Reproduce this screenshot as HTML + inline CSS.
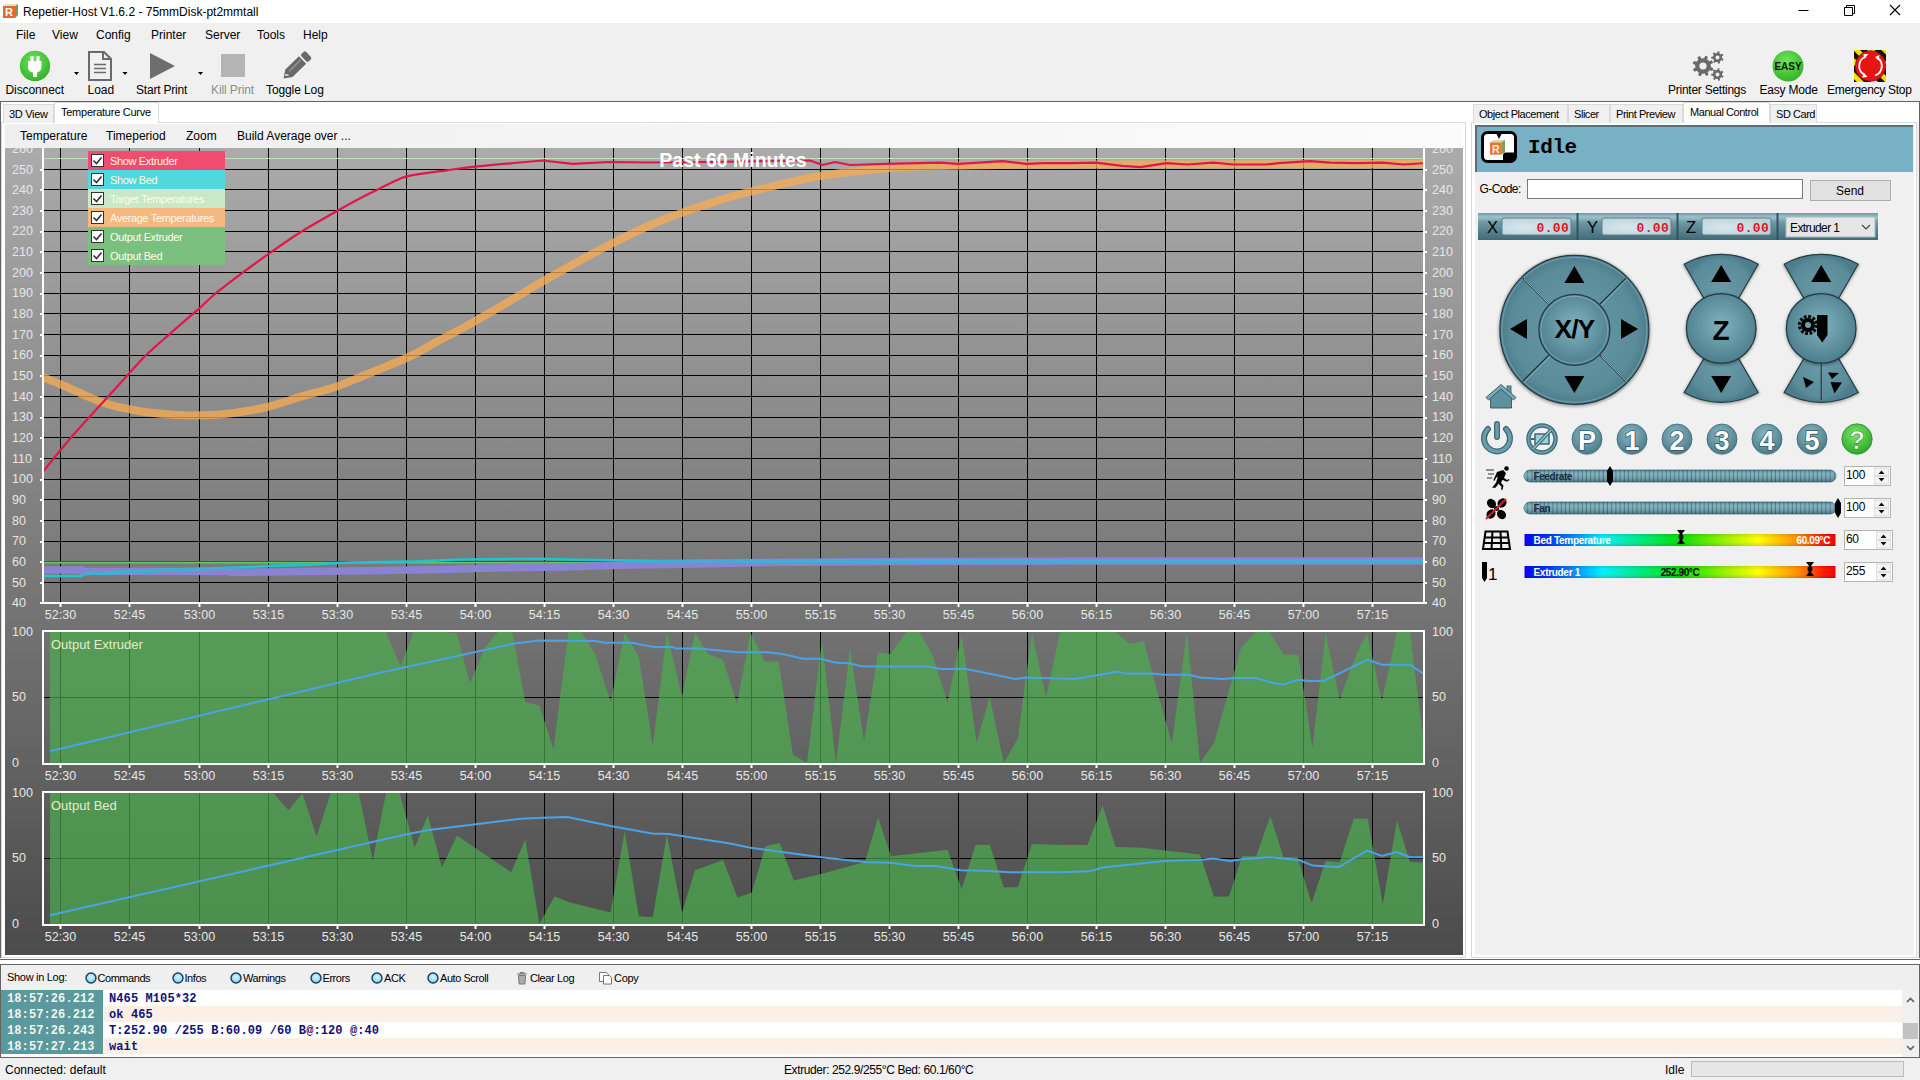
<!DOCTYPE html><html><head><meta charset="utf-8"><style>
*{margin:0;padding:0;box-sizing:border-box}
html,body{width:1920px;height:1080px;overflow:hidden;background:#f0f0f0;font-family:"Liberation Sans", sans-serif;}
.r{position:absolute}
.t{position:absolute;line-height:1;white-space:pre}
</style></head><body><div class="r" style="left:0px;top:0px;width:1920px;height:23px;background:#fff;"></div><svg class="r" style="left:2px;top:3px" width="17" height="16" viewBox="0 0 17 16"><path d="M1 3 L4 1 L16 1 L16 12 L13 15 L1 15Z" fill="#d9d0b0"/><rect x="1" y="3" width="12" height="12" fill="#e06a30"/><path d="M13 3 L16 1 L16 12 L13 15Z" fill="#7a9a50"/><path d="M1 3 L4 1 L16 1 L13 3Z" fill="#e8e0c0"/><text x="7" y="13" font-family="Liberation Sans" font-weight="bold" font-size="11" fill="#fff" text-anchor="middle">R</text></svg><div class="t" style="left:23px;top:5.84px;font-size:12px;color:#000;">Repetier-Host V1.6.2 - 75mmDisk-pt2mmtall</div><svg class="r" style="left:1790px;top:0" width="130" height="23"><path d="M8.5 10.5h10" stroke="#000" stroke-width="1"/><path d="M54.5 7.5h8v8h-8z M56.5 7.5v-2h8v8h-2" stroke="#000" fill="none" stroke-width="1"/><path d="M100 5l10 10M110 5l-10 10" stroke="#000" stroke-width="1.1"/></svg><div class="t" style="left:16px;top:28.84px;font-size:12px;color:#000;">File</div><div class="t" style="left:52px;top:28.84px;font-size:12px;color:#000;">View</div><div class="t" style="left:96px;top:28.84px;font-size:12px;color:#000;">Config</div><div class="t" style="left:151px;top:28.84px;font-size:12px;color:#000;">Printer</div><div class="t" style="left:205px;top:28.84px;font-size:12px;color:#000;">Server</div><div class="t" style="left:257px;top:28.84px;font-size:12px;color:#000;">Tools</div><div class="t" style="left:303px;top:28.84px;font-size:12px;color:#000;">Help</div><svg class="r" style="left:0;top:46px" width="340" height="40" viewBox="0 46 340 40">
<defs><radialGradient id="gg" cx="0.45" cy="0.35" r="0.7"><stop offset="0" stop-color="#6ee85a"/><stop offset="1" stop-color="#2fae25"/></radialGradient></defs>
<circle cx="35" cy="66" r="15.2" fill="url(#gg)"/>
<path d="M30.5 56h3v5h3v-5h3v5h2v6c0 3-2 5-4.5 5.5V77h-4v-4.5C29.5 72 28 70 28 67v-6h2.5z" fill="#fff"/>
<path d="M74 72h5l-2.5 3z M122.5 72h5l-2.5 3z M198 72h5l-2.5 3z" fill="#000"/>
<path d="M89 52h15l7 7v21h-22z" fill="none" stroke="#6a6a6a" stroke-width="2"/><path d="M103 52v7h8" fill="none" stroke="#6a6a6a" stroke-width="2"/>
<path d="M94 64.5h12M94 68.5h12M94 72.5h12" stroke="#6a6a6a" stroke-width="1.6"/>
<path d="M150 53L175 66L150 79z" fill="#6e6e6e"/>
<rect x="221" y="54" width="24" height="23" fill="#b4b4b4"/>
<g transform="translate(283.5 78.5) rotate(-44)"><path d="M0 0L7.5 -5.2H26.5V5.2H7.5Z" fill="#6a6a6a"/><rect x="28.3" y="-5.2" width="6.5" height="10.4" rx="2" fill="#6a6a6a"/><path d="M9 -1.4H25.5" stroke="#c8c8c8" stroke-width="0.8"/><path d="M3.5 -1.5l2.5 2.5" stroke="#f0f0f0" stroke-width="1.3"/></g>
</svg><div class="t" style="left:5.5px;top:83.84px;font-size:12px;color:#000;letter-spacing:-0.1px;">Disconnect</div><div class="t" style="left:87.5px;top:83.84px;font-size:12px;color:#000;">Load</div><div class="t" style="left:136px;top:83.84px;font-size:12px;color:#000;letter-spacing:-0.2px;">Start Print</div><div class="t" style="left:211px;top:83.84px;font-size:12px;color:#8c8c8c;letter-spacing:-0.1px;">Kill Print</div><div class="t" style="left:266px;top:83.84px;font-size:12px;color:#000;letter-spacing:-0.1px;">Toggle Log</div><svg class="r" style="left:1660px;top:46px" width="260" height="40" viewBox="1660 46 260 40">
<defs><radialGradient id="eg" cx="0.45" cy="0.35" r="0.7"><stop offset="0" stop-color="#6ee85a"/><stop offset="1" stop-color="#2fae25"/></radialGradient>
<pattern id="stripe" width="10" height="10" patternUnits="userSpaceOnUse" patternTransform="rotate(-45)"><rect width="5" height="10" fill="#111"/><rect x="5" width="5" height="10" fill="#f4e000"/></pattern></defs>
<path d="M1710.80 66.00 L1710.72 67.10 L1713.25 68.29 L1712.28 70.91 L1709.59 70.18 L1708.52 71.52 L1708.52 71.52 L1707.68 72.24 L1708.63 74.87 L1706.09 76.04 L1704.70 73.61 L1703.00 73.80 L1703.00 73.80 L1701.90 73.72 L1700.71 76.25 L1698.09 75.28 L1698.82 72.59 L1697.48 71.52 L1697.48 71.52 L1696.76 70.68 L1694.13 71.63 L1692.96 69.09 L1695.39 67.70 L1695.20 66.00 L1695.20 66.00 L1695.28 64.90 L1692.75 63.71 L1693.72 61.09 L1696.41 61.82 L1697.48 60.48 L1697.48 60.48 L1698.32 59.76 L1697.37 57.13 L1699.91 55.96 L1701.30 58.39 L1703.00 58.20 L1703.00 58.20 L1704.10 58.28 L1705.29 55.75 L1707.91 56.72 L1707.18 59.41 L1708.52 60.48 L1708.52 60.48 L1709.24 61.32 L1711.87 60.37 L1713.04 62.91 L1710.61 64.30 L1710.80 66.00Z M1706.60 66.00 A3.6 3.6 0 1 0 1699.40 66.00 A3.6 3.6 0 1 0 1706.60 66.00Z M1722.10 57.50 L1722.04 58.24 L1723.60 59.07 L1722.85 60.83 L1721.17 60.27 L1720.37 61.10 L1720.37 61.10 L1719.75 61.51 L1720.08 63.25 L1718.23 63.76 L1717.62 62.10 L1716.48 61.98 L1716.48 61.98 L1715.77 61.76 L1714.61 63.10 L1713.07 61.97 L1713.98 60.46 L1713.36 59.50 L1713.36 59.50 L1713.09 58.80 L1711.32 58.74 L1711.24 56.82 L1712.99 56.60 L1713.36 55.50 L1713.36 55.50 L1713.73 54.86 L1712.68 53.44 L1714.12 52.18 L1715.39 53.41 L1716.48 53.02 L1716.48 53.02 L1717.21 52.91 L1717.67 51.20 L1719.55 51.54 L1719.38 53.30 L1720.37 53.90 L1720.37 53.90 L1720.91 54.41 L1722.53 53.71 L1723.44 55.39 L1721.96 56.36 L1722.10 57.50Z M1719.50 57.50 A2.0 2.0 0 1 0 1715.50 57.50 A2.0 2.0 0 1 0 1719.50 57.50Z M1722.10 74.50 L1722.04 75.24 L1723.60 76.07 L1722.85 77.83 L1721.17 77.27 L1720.37 78.10 L1720.37 78.10 L1719.75 78.51 L1720.08 80.25 L1718.23 80.76 L1717.62 79.10 L1716.48 78.98 L1716.48 78.98 L1715.77 78.76 L1714.61 80.10 L1713.07 78.97 L1713.98 77.46 L1713.36 76.50 L1713.36 76.50 L1713.09 75.80 L1711.32 75.74 L1711.24 73.82 L1712.99 73.60 L1713.36 72.50 L1713.36 72.50 L1713.73 71.86 L1712.68 70.44 L1714.12 69.18 L1715.39 70.41 L1716.48 70.02 L1716.48 70.02 L1717.21 69.91 L1717.67 68.20 L1719.55 68.54 L1719.38 70.30 L1720.37 70.90 L1720.37 70.90 L1720.91 71.41 L1722.53 70.71 L1723.44 72.39 L1721.96 73.36 L1722.10 74.50Z M1719.50 74.50 A2.0 2.0 0 1 0 1715.50 74.50 A2.0 2.0 0 1 0 1719.50 74.50Z" fill="#6a6a6a" fill-rule="evenodd"/>
<circle cx="1788" cy="66" r="15.5" fill="url(#eg)"/>
<text x="1788" y="70" font-family="Liberation Sans" font-weight="bold" font-size="10" fill="#111" text-anchor="middle">EASY</text>
<rect x="1854" y="50" width="32" height="32" fill="url(#stripe)"/>
<circle cx="1870.5" cy="66" r="15.2" fill="#e81414" stroke="#a00808" stroke-width="0.8"/>
<path d="M1866 56.5A10 10 0 0 0 1864 74.5" stroke="#fff" stroke-width="1.8" fill="none"/><path d="M1875 75.5A10 10 0 0 0 1877 57.5" stroke="#fff" stroke-width="1.8" fill="none"/>
<path d="M1868.5 54l-4.5 5l-0.5-5z M1862 77.5l5.5-0.5l-3.5-4z M1879.5 55l-1 5.5l-3.5-3.5z" fill="#fff"/>
</svg><div class="t" style="left:1668px;top:83.84px;font-size:12px;color:#000;letter-spacing:-0.25px;">Printer Settings</div><div class="t" style="left:1759.5px;top:83.84px;font-size:12px;color:#000;letter-spacing:-0.2px;">Easy Mode</div><div class="t" style="left:1827px;top:83.84px;font-size:12px;color:#000;letter-spacing:-0.3px;">Emergency Stop</div><div class="r" style="left:0px;top:101px;width:1920px;height:1px;background:#646464;"></div><div class="r" style="left:0px;top:102px;width:1920px;height:20px;background:#fff;"></div><div class="r" style="left:0px;top:101px;width:1px;height:957px;background:#646464;"></div><div class="r" style="left:1919px;top:101px;width:1px;height:957px;background:#646464;"></div><div class="r" style="left:1px;top:122px;width:1465px;height:836px;background:#fff;border:1px solid #dadada;"></div><div class="r" style="left:3px;top:104px;width:51px;height:19px;background:#f0f0f0;border:1px solid #dadada;border-bottom:none;"></div><div class="t" style="left:9px;top:108.69px;font-size:11px;color:#000;letter-spacing:-0.3px;">3D View</div><div class="r" style="left:54px;top:102px;width:105px;height:21px;background:#fff;border:1px solid #dadada;border-bottom:none;"></div><div class="t" style="left:61px;top:106.69px;font-size:11px;color:#000;letter-spacing:-0.25px;">Temperature Curve</div><div class="r" style="left:5px;top:124px;width:1458px;height:24px;background:linear-gradient(90deg,#efefef,#f5f5f5 50%,#fbfbfb);"></div><div class="t" style="left:20px;top:129.84px;font-size:12px;color:#000;">Temperature</div><div class="t" style="left:106px;top:129.84px;font-size:12px;color:#000;">Timeperiod</div><div class="t" style="left:186px;top:129.84px;font-size:12px;color:#000;">Zoom</div><div class="t" style="left:237px;top:129.84px;font-size:12px;color:#000;">Build Average over ...</div><svg class="r" style="left:0;top:0" width="1920" height="1080" viewBox="0 0 1920 1080"><defs><linearGradient id="cbg" x1="0" y1="0" x2="0" y2="1"><stop offset="0" stop-color="#ababab"/><stop offset="1" stop-color="#4b4b4b"/></linearGradient><clipPath id="cpT"><rect x="44" y="148" width="1379" height="454"/></clipPath><clipPath id="cpE"><rect x="44" y="632" width="1379" height="131"/></clipPath><clipPath id="cpB"><rect x="44" y="793" width="1379" height="131"/></clipPath></defs><rect x="5" y="148" width="1458" height="807" fill="url(#cbg)"/><path d="M44 169.5H1423 M44 189.5H1423 M44 210.5H1423 M44 231.5H1423 M44 251.5H1423 M44 272.5H1423 M44 293.5H1423 M44 313.5H1423 M44 334.5H1423 M44 355.5H1423 M44 375.5H1423 M44 396.5H1423 M44 417.5H1423 M44 437.5H1423 M44 458.5H1423 M44 479.5H1423 M44 499.5H1423 M44 520.5H1423 M44 541.5H1423 M44 561.5H1423 M44 582.5H1423 M60.5 148V602 M129.5 148V602 M199.5 148V602 M268.5 148V602 M337.5 148V602 M406.5 148V602 M475.5 148V602 M544.5 148V602 M613.5 148V602 M682.5 148V602 M751.5 148V602 M820.5 148V602 M889.5 148V602 M958.5 148V602 M1027.5 148V602 M1096.5 148V602 M1165.5 148V602 M1234.5 148V602 M1303.5 148V602 M1372.5 148V602" stroke="#000" stroke-width="1" fill="none"/><g clip-path="url(#cpT)"><path d="M44 158.5H1423" stroke="#bfe3bd" stroke-width="1.2"/><path d="M44 562.5H1423" stroke="#62c862" stroke-width="2"/><polyline points="44.0,576.0 82.0,576.0 82.5,574.4 108.0,573.0 167.0,570.0 192.0,569.0 235.0,567.5 257.0,566.6 280.0,565.6 305.0,565.0 330.0,563.4 352.0,562.5 384.0,561.9 420.0,561.2 462.0,559.4 540.0,558.8 567.0,559.4 660.0,561.0 716.0,560.6 740.0,561.0 1424.0,561.0" fill="none" stroke="#1ec4d0" stroke-width="2.5"/><polyline points="44.0,570.0 81.0,570.0 81.5,571.2 231.0,571.5 231.5,572.5 270.0,572.0 386.0,570.5 440.0,569.4 482.0,568.2 524.0,567.5 560.0,566.9 595.0,566.0 630.0,565.0 670.0,564.4 715.0,563.8 760.0,562.5 900.0,561.5 1100.0,561.0 1424.0,561.0" fill="none" stroke="#8a82d2" stroke-width="7.5"/><clipPath id="cpP"><polygon points="44.0,566.2 81.0,566.2 81.5,567.5 231.0,567.8 231.5,568.8 270.0,568.2 386.0,566.8 440.0,565.6 482.0,564.5 524.0,563.8 560.0,563.1 595.0,562.2 630.0,561.2 670.0,560.6 715.0,560.0 760.0,558.8 900.0,557.8 1100.0,557.2 1424.0,557.2 1424.0,564.8 1100.0,564.8 900.0,565.2 760.0,566.2 715.0,567.5 670.0,568.1 630.0,568.8 595.0,569.8 560.0,570.6 524.0,571.2 482.0,572.0 440.0,573.1 386.0,574.2 270.0,575.8 231.5,576.2 231.0,575.2 81.5,575.0 81.0,573.8 44.0,573.8"/></clipPath><polyline clip-path="url(#cpP)" points="44.0,576.0 82.0,576.0 82.5,574.4 108.0,573.0 167.0,570.0 192.0,569.0 235.0,567.5 257.0,566.6 280.0,565.6 305.0,565.0 330.0,563.4 352.0,562.5 384.0,561.9 420.0,561.2 462.0,559.4 540.0,558.8 567.0,559.4 660.0,561.0 716.0,560.6 740.0,561.0 1424.0,561.0" fill="none" stroke="#42aed6" stroke-width="4"/><path d="M38.0 375.0C39.0 375.4 39.2 375.6 43.8 377.5C48.2 379.4 55.2 382.1 65.0 386.2C74.8 390.4 90.0 398.3 102.5 402.5C115.0 406.7 127.5 409.2 140.0 411.2C152.5 413.3 167.5 414.3 177.5 415.0C187.5 415.7 191.7 415.5 200.0 415.3C208.3 415.1 216.7 415.1 227.5 413.8C238.3 412.4 252.5 410.4 265.0 407.5C277.5 404.6 290.4 399.8 302.5 396.2C314.6 392.7 327.1 389.8 337.5 386.2C347.9 382.7 353.3 379.8 365.0 375.0C376.7 370.2 395.0 363.3 407.5 357.5C420.0 351.7 428.8 346.0 440.0 340.0C451.2 334.0 461.7 328.8 475.0 321.2C488.3 313.8 508.3 301.9 520.0 295.0C531.7 288.1 530.0 288.4 545.0 280.0C560.0 271.6 590.8 254.3 610.0 244.5C629.2 234.7 641.7 228.4 660.0 221.0C678.3 213.6 704.8 204.9 720.0 200.0C735.2 195.1 734.6 195.5 751.2 191.5C767.9 187.5 796.9 179.9 820.0 176.0C843.1 172.1 870.0 169.7 890.0 168.0C910.0 166.3 921.7 166.5 940.0 166.0C958.3 165.5 973.3 165.2 1000.0 165.0C1026.7 164.8 1029.3 164.7 1100.0 164.5C1170.7 164.3 1370.0 164.1 1424.0 164.0" fill="none" stroke="rgb(251,171,80)" stroke-opacity="0.74" stroke-width="8"/><path d="M43.6 471.0C48.0 465.6 59.8 450.6 70.0 438.8C80.2 426.9 95.2 410.8 105.0 400.0C114.8 389.2 121.7 381.5 128.8 373.8C135.8 366.0 140.6 360.4 147.5 353.8C154.4 347.1 161.5 341.2 170.0 333.8C178.5 326.2 191.0 315.6 198.8 308.8C206.5 301.9 209.5 298.4 216.7 292.5C223.9 286.6 233.1 279.7 241.7 273.3C250.3 266.9 258.6 261.0 268.3 254.2C278.0 247.4 288.5 239.7 300.0 232.5C311.5 225.3 327.8 216.4 337.5 210.8C347.2 205.2 351.5 202.8 358.3 199.2C365.1 195.6 371.4 192.6 378.3 189.2C385.2 185.8 394.2 181.1 400.0 178.7C405.8 176.3 405.5 176.4 413.3 175.0C421.1 173.6 436.4 171.7 446.7 170.3C457.0 168.9 462.8 168.0 475.0 166.7C487.2 165.4 512.5 163.2 520.0 162.5" fill="none" stroke="#e0174a" stroke-width="2.2"/><polyline points="520.0,162.5 542.5,160.5 572.5,163.8 610.0,162.0 647.5,162.5 710.0,162.0 810.0,160.5 822.5,165.0 835.0,162.0 850.0,165.0 885.0,163.8 940.0,162.7 958.0,163.8 979.0,162.7 1002.5,161.1 1026.0,163.8 1044.0,163.2 1070.0,163.2 1096.0,162.7 1122.0,165.8 1140.5,167.1 1166.6,163.2 1187.4,164.5 1213.4,162.7 1234.0,164.5 1265.5,164.5 1278.5,163.2 1309.8,161.1 1330.6,162.7 1356.7,163.2 1382.7,162.7 1403.5,164.5 1424.0,163.2" fill="none" stroke="#e0174a" stroke-width="2.2" stroke-linejoin="round"/></g><path d="M43 148V603H1424V148" stroke="#fff" stroke-width="2" fill="none"/><path d="M40 170h2M1425 170h2 M40 190h2M1425 190h2 M40 211h2M1425 211h2 M40 232h2M1425 232h2 M40 252h2M1425 252h2 M40 273h2M1425 273h2 M40 294h2M1425 294h2 M40 314h2M1425 314h2 M40 335h2M1425 335h2 M40 356h2M1425 356h2 M40 376h2M1425 376h2 M40 397h2M1425 397h2 M40 418h2M1425 418h2 M40 438h2M1425 438h2 M40 459h2M1425 459h2 M40 480h2M1425 480h2 M40 500h2M1425 500h2 M40 521h2M1425 521h2 M40 542h2M1425 542h2 M40 562h2M1425 562h2 M40 583h2M1425 583h2 M40 603h2M1425 603h2 M60.5 604v3 M129.5 604v3 M199.5 604v3 M268.5 604v3 M337.5 604v3 M406.5 604v3 M475.5 604v3 M544.5 604v3 M613.5 604v3 M682.5 604v3 M751.5 604v3 M820.5 604v3 M889.5 604v3 M958.5 604v3 M1027.5 604v3 M1096.5 604v3 M1165.5 604v3 M1234.5 604v3 M1303.5 604v3 M1372.5 604v3" stroke="#fff" stroke-width="2" fill="none"/><g clip-path="url(#cpL)"></g><svg x="5" y="148" width="1458" height="807" viewBox="5 148 1458 807" overflow="hidden"><g font-family="Liberation Sans, sans-serif" font-size="12.5" fill="#e6e6e6"><text x="12" y="152.8">260</text><text x="1432" y="152.8">260</text><text x="12" y="173.5">250</text><text x="1432" y="173.5">250</text><text x="12" y="194.1">240</text><text x="1432" y="194.1">240</text><text x="12" y="214.8">230</text><text x="1432" y="214.8">230</text><text x="12" y="235.4">220</text><text x="1432" y="235.4">220</text><text x="12" y="256.1">210</text><text x="1432" y="256.1">210</text><text x="12" y="276.8">200</text><text x="1432" y="276.8">200</text><text x="12" y="297.4">190</text><text x="1432" y="297.4">190</text><text x="12" y="318.1">180</text><text x="1432" y="318.1">180</text><text x="12" y="338.7">170</text><text x="1432" y="338.7">170</text><text x="12" y="359.4">160</text><text x="1432" y="359.4">160</text><text x="12" y="380.0">150</text><text x="1432" y="380.0">150</text><text x="12" y="400.7">140</text><text x="1432" y="400.7">140</text><text x="12" y="421.3">130</text><text x="1432" y="421.3">130</text><text x="12" y="442.0">120</text><text x="1432" y="442.0">120</text><text x="12" y="462.6">110</text><text x="1432" y="462.6">110</text><text x="12" y="483.2">100</text><text x="1432" y="483.2">100</text><text x="12" y="503.9">90</text><text x="1432" y="503.9">90</text><text x="12" y="524.6">80</text><text x="1432" y="524.6">80</text><text x="12" y="545.2">70</text><text x="1432" y="545.2">70</text><text x="12" y="565.9">60</text><text x="1432" y="565.9">60</text><text x="12" y="586.5">50</text><text x="1432" y="586.5">50</text><text x="12" y="607.1">40</text><text x="1432" y="607.1">40</text><text x="60.5" y="619" text-anchor="middle">52:30</text><text x="60.5" y="780" text-anchor="middle">52:30</text><text x="60.5" y="941" text-anchor="middle">52:30</text><text x="129.5" y="619" text-anchor="middle">52:45</text><text x="129.5" y="780" text-anchor="middle">52:45</text><text x="129.5" y="941" text-anchor="middle">52:45</text><text x="199.5" y="619" text-anchor="middle">53:00</text><text x="199.5" y="780" text-anchor="middle">53:00</text><text x="199.5" y="941" text-anchor="middle">53:00</text><text x="268.5" y="619" text-anchor="middle">53:15</text><text x="268.5" y="780" text-anchor="middle">53:15</text><text x="268.5" y="941" text-anchor="middle">53:15</text><text x="337.5" y="619" text-anchor="middle">53:30</text><text x="337.5" y="780" text-anchor="middle">53:30</text><text x="337.5" y="941" text-anchor="middle">53:30</text><text x="406.5" y="619" text-anchor="middle">53:45</text><text x="406.5" y="780" text-anchor="middle">53:45</text><text x="406.5" y="941" text-anchor="middle">53:45</text><text x="475.5" y="619" text-anchor="middle">54:00</text><text x="475.5" y="780" text-anchor="middle">54:00</text><text x="475.5" y="941" text-anchor="middle">54:00</text><text x="544.5" y="619" text-anchor="middle">54:15</text><text x="544.5" y="780" text-anchor="middle">54:15</text><text x="544.5" y="941" text-anchor="middle">54:15</text><text x="613.5" y="619" text-anchor="middle">54:30</text><text x="613.5" y="780" text-anchor="middle">54:30</text><text x="613.5" y="941" text-anchor="middle">54:30</text><text x="682.5" y="619" text-anchor="middle">54:45</text><text x="682.5" y="780" text-anchor="middle">54:45</text><text x="682.5" y="941" text-anchor="middle">54:45</text><text x="751.5" y="619" text-anchor="middle">55:00</text><text x="751.5" y="780" text-anchor="middle">55:00</text><text x="751.5" y="941" text-anchor="middle">55:00</text><text x="820.5" y="619" text-anchor="middle">55:15</text><text x="820.5" y="780" text-anchor="middle">55:15</text><text x="820.5" y="941" text-anchor="middle">55:15</text><text x="889.5" y="619" text-anchor="middle">55:30</text><text x="889.5" y="780" text-anchor="middle">55:30</text><text x="889.5" y="941" text-anchor="middle">55:30</text><text x="958.5" y="619" text-anchor="middle">55:45</text><text x="958.5" y="780" text-anchor="middle">55:45</text><text x="958.5" y="941" text-anchor="middle">55:45</text><text x="1027.5" y="619" text-anchor="middle">56:00</text><text x="1027.5" y="780" text-anchor="middle">56:00</text><text x="1027.5" y="941" text-anchor="middle">56:00</text><text x="1096.5" y="619" text-anchor="middle">56:15</text><text x="1096.5" y="780" text-anchor="middle">56:15</text><text x="1096.5" y="941" text-anchor="middle">56:15</text><text x="1165.5" y="619" text-anchor="middle">56:30</text><text x="1165.5" y="780" text-anchor="middle">56:30</text><text x="1165.5" y="941" text-anchor="middle">56:30</text><text x="1234.5" y="619" text-anchor="middle">56:45</text><text x="1234.5" y="780" text-anchor="middle">56:45</text><text x="1234.5" y="941" text-anchor="middle">56:45</text><text x="1303.5" y="619" text-anchor="middle">57:00</text><text x="1303.5" y="780" text-anchor="middle">57:00</text><text x="1303.5" y="941" text-anchor="middle">57:00</text><text x="1372.5" y="619" text-anchor="middle">57:15</text><text x="1372.5" y="780" text-anchor="middle">57:15</text><text x="1372.5" y="941" text-anchor="middle">57:15</text><text x="12" y="635.8">100</text><text x="1432" y="635.8">100</text><text x="12" y="701.3">50</text><text x="1432" y="701.3">50</text><text x="12" y="766.8">0</text><text x="1432" y="766.8">0</text><text x="12" y="796.8">100</text><text x="1432" y="796.8">100</text><text x="12" y="862.3">50</text><text x="1432" y="862.3">50</text><text x="12" y="927.8">0</text><text x="1432" y="927.8">0</text></g></svg><path d="M44 697.5H1423 M60.5 632V763 M129.5 632V763 M199.5 632V763 M268.5 632V763 M337.5 632V763 M406.5 632V763 M475.5 632V763 M544.5 632V763 M613.5 632V763 M682.5 632V763 M751.5 632V763 M820.5 632V763 M889.5 632V763 M958.5 632V763 M1027.5 632V763 M1096.5 632V763 M1165.5 632V763 M1234.5 632V763 M1303.5 632V763 M1372.5 632V763" stroke="#000" stroke-width="1" fill="none"/><g clip-path="url(#cpE)"><polygon points="50.0,632.0 385.6,632.0 400.6,666.0 413.8,632.0 441.9,632.0 456.9,633.4 470.0,683.0 485.0,647.5 498.0,632.0 512.2,632.0 525.3,701.9 539.4,705.6 553.4,748.8 568.4,632.0 581.6,632.0 595.6,655.0 610.6,701.9 624.7,632.5 638.8,656.9 652.8,745.0 666.9,632.5 681.9,696.2 695.0,632.5 708.1,654.0 723.1,659.7 737.1,703.8 750.6,632.5 764.7,661.6 778.8,661.6 792.8,754.4 806.9,763.0 821.9,640.0 836.0,762.8 850.0,648.4 864.0,741.2 878.1,652.2 890.3,654.0 906.2,632.0 919.4,632.0 932.5,655.0 947.5,701.9 961.6,634.4 976.6,742.2 989.7,697.2 1003.8,762.8 1017.8,738.4 1031.9,632.5 1046.0,697.2 1060.0,632.0 1115.6,632.0 1129.7,643.8 1143.8,641.0 1158.8,697.2 1171.9,743.0 1186.9,632.5 1200.0,762.8 1214.0,743.0 1241.2,647.5 1256.2,632.0 1269.4,632.0 1283.4,654.0 1298.4,655.0 1312.5,747.8 1325.6,633.4 1339.7,700.0 1353.8,660.6 1366.9,632.5 1381.9,701.0 1396.9,632.0 1410.0,632.0 1423.0,735.6 1423.1,763.0 50.0,763.0" fill="rgb(73,176,76)" fill-opacity="0.68"/><polyline points="49.8,751.2 380.0,672.8 513.0,643.8 539.4,640.4 595.6,641.0 605.0,642.8 631.3,642.8 653.8,647.0 672.5,647.0 676.0,648.4 698.8,648.4 737.5,652.2 767.5,652.2 782.5,654.0 803.0,658.8 820.0,658.8 835.0,662.5 850.0,663.4 861.2,666.2 876.2,666.6 928.8,666.6 940.0,669.0 966.2,669.0 981.2,671.9 1015.0,679.0 1026.2,677.5 1075.0,679.0 1090.0,676.6 1117.5,671.5 1125.0,673.4 1151.2,673.4 1164.4,674.7 1188.8,674.7 1200.0,677.5 1222.5,679.0 1235.6,678.0 1256.2,678.0 1273.1,683.1 1283.4,684.6 1297.5,679.8 1308.8,680.9 1323.8,680.9 1342.5,671.9 1367.8,659.7 1381.9,664.8 1410.0,664.8 1423.1,673.4" fill="none" stroke="#4aa3e6" stroke-width="2"/></g><rect x="43" y="631" width="1381" height="133" stroke="#fff" stroke-width="2" fill="none"/><path d="M60.5 765v3 M129.5 765v3 M199.5 765v3 M268.5 765v3 M337.5 765v3 M406.5 765v3 M475.5 765v3 M544.5 765v3 M613.5 765v3 M682.5 765v3 M751.5 765v3 M820.5 765v3 M889.5 765v3 M958.5 765v3 M1027.5 765v3 M1096.5 765v3 M1165.5 765v3 M1234.5 765v3 M1303.5 765v3 M1372.5 765v3" stroke="#fff" stroke-width="2" fill="none"/><text x="51" y="649" font-family="Liberation Sans, sans-serif" font-size="13" fill="#e4eccc">Output Extruder</text><path d="M44 858.5H1423 M60.5 793V924 M129.5 793V924 M199.5 793V924 M268.5 793V924 M337.5 793V924 M406.5 793V924 M475.5 793V924 M544.5 793V924 M613.5 793V924 M682.5 793V924 M751.5 793V924 M820.5 793V924 M889.5 793V924 M958.5 793V924 M1027.5 793V924 M1096.5 793V924 M1165.5 793V924 M1234.5 793V924 M1303.5 793V924 M1372.5 793V924" stroke="#000" stroke-width="1" fill="none"/><g clip-path="url(#cpB)"><polygon points="50.0,793.0 273.4,793.0 288.4,810.3 302.5,793.4 316.6,836.6 330.6,793.0 358.8,793.0 372.8,860.0 386.0,793.0 399.7,793.0 414.7,847.8 427.8,815.0 441.9,867.5 456.9,835.6 511.2,872.2 525.3,839.4 539.4,923.8 554.4,896.6 569.4,902.2 610.6,912.5 624.7,831.0 638.8,916.2 652.8,917.2 666.9,834.7 681.9,912.5 695.0,870.3 723.1,860.0 737.5,897.5 751.6,892.8 765.6,846.0 779.7,843.1 793.8,880.6 820.9,874.0 865.0,861.9 878.1,817.8 891.2,856.2 947.5,849.7 961.6,889.0 975.6,845.0 989.7,845.0 1003.8,887.2 1017.8,887.2 1031.9,844.0 1063.8,845.0 1087.5,845.0 1102.5,805.6 1115.6,846.9 1141.9,847.8 1200.0,854.4 1214.0,896.6 1229.0,896.6 1242.2,856.2 1256.2,856.2 1270.3,816.0 1283.4,857.2 1297.5,857.2 1311.6,903.1 1325.6,861.0 1339.7,861.9 1353.8,818.8 1367.8,818.8 1382.8,904.0 1396.9,820.6 1410.0,861.9 1423.1,862.8 1423.1,924.0 50.0,924.0" fill="rgb(73,176,76)" fill-opacity="0.68"/><polyline points="49.8,915.3 404.4,834.7 428.8,830.0 473.8,824.4 520.6,818.8 543.1,817.8 567.5,816.9 610.6,825.9 651.9,833.4 668.8,834.1 730.0,843.5 750.6,847.8 820.9,857.2 865.0,861.9 889.4,862.8 915.6,866.0 936.2,866.0 960.6,870.3 988.8,870.9 1009.4,872.2 1058.1,872.2 1089.4,871.2 1102.5,867.5 1164.4,861.0 1200.0,860.0 1213.1,858.5 1230.0,861.0 1243.1,859.1 1269.4,857.2 1299.4,860.0 1312.5,865.6 1338.8,867.1 1366.9,850.6 1381.9,855.9 1396.9,852.1 1410.0,857.2 1423.1,857.2" fill="none" stroke="#4aa3e6" stroke-width="2"/></g><rect x="43" y="792" width="1381" height="133" stroke="#fff" stroke-width="2" fill="none"/><path d="M60.5 926v3 M129.5 926v3 M199.5 926v3 M268.5 926v3 M337.5 926v3 M406.5 926v3 M475.5 926v3 M544.5 926v3 M613.5 926v3 M682.5 926v3 M751.5 926v3 M820.5 926v3 M889.5 926v3 M958.5 926v3 M1027.5 926v3 M1096.5 926v3 M1165.5 926v3 M1234.5 926v3 M1303.5 926v3 M1372.5 926v3" stroke="#fff" stroke-width="2" fill="none"/><text x="51" y="810" font-family="Liberation Sans, sans-serif" font-size="13" fill="#e4eccc">Output Bed</text><text x="733" y="167" font-family="Liberation Sans, sans-serif" font-size="19.5" font-weight="bold" fill="#fff" text-anchor="middle">Past 60 Minutes</text></svg><div class="r" style="left:88px;top:151px;width:137px;height:19px;background:#f04c70;"></div><svg class="r" style="left:91px;top:154px" width="13" height="13"><rect x="0.5" y="0.5" width="12" height="12" fill="#fff" stroke="#333"/><path d="M2.5 6.5l3 3 5-6" stroke="#333" stroke-width="1.6" fill="none"/></svg><div class="t" style="left:110px;top:155.69px;font-size:11px;color:#fffbe8;letter-spacing:-0.35px;">Show Extruder</div><div class="r" style="left:88px;top:170px;width:137px;height:19px;background:#50d8dc;"></div><svg class="r" style="left:91px;top:173px" width="13" height="13"><rect x="0.5" y="0.5" width="12" height="12" fill="#fff" stroke="#333"/><path d="M2.5 6.5l3 3 5-6" stroke="#333" stroke-width="1.6" fill="none"/></svg><div class="t" style="left:110px;top:174.69px;font-size:11px;color:#fffbe8;letter-spacing:-0.35px;">Show Bed</div><div class="r" style="left:88px;top:189px;width:137px;height:19px;background:#c8e8c8;"></div><svg class="r" style="left:91px;top:192px" width="13" height="13"><rect x="0.5" y="0.5" width="12" height="12" fill="#fff" stroke="#333"/><path d="M2.5 6.5l3 3 5-6" stroke="#333" stroke-width="1.6" fill="none"/></svg><div class="t" style="left:110px;top:193.69px;font-size:11px;color:#fffbe8;letter-spacing:-0.35px;">Target Temperatures</div><div class="r" style="left:88px;top:208px;width:137px;height:19px;background:#f4b880;"></div><svg class="r" style="left:91px;top:211px" width="13" height="13"><rect x="0.5" y="0.5" width="12" height="12" fill="#fff" stroke="#333"/><path d="M2.5 6.5l3 3 5-6" stroke="#333" stroke-width="1.6" fill="none"/></svg><div class="t" style="left:110px;top:212.69px;font-size:11px;color:#fffbe8;letter-spacing:-0.35px;">Average Temperatures</div><div class="r" style="left:88px;top:227px;width:137px;height:19px;background:#7cc080;"></div><svg class="r" style="left:91px;top:230px" width="13" height="13"><rect x="0.5" y="0.5" width="12" height="12" fill="#fff" stroke="#333"/><path d="M2.5 6.5l3 3 5-6" stroke="#333" stroke-width="1.6" fill="none"/></svg><div class="t" style="left:110px;top:231.69px;font-size:11px;color:#fffbe8;letter-spacing:-0.35px;">Output Extruder</div><div class="r" style="left:88px;top:246px;width:137px;height:19px;background:#7cc080;"></div><svg class="r" style="left:91px;top:249px" width="13" height="13"><rect x="0.5" y="0.5" width="12" height="12" fill="#fff" stroke="#333"/><path d="M2.5 6.5l3 3 5-6" stroke="#333" stroke-width="1.6" fill="none"/></svg><div class="t" style="left:110px;top:250.69px;font-size:11px;color:#fffbe8;letter-spacing:-0.35px;">Output Bed</div><div class="r" style="left:1471px;top:122px;width:446px;height:836px;background:#fff;border:1px solid #dadada;"></div><div class="r" style="left:1475px;top:125px;width:439px;height:830px;background:#f0f0f0;"></div><div class="r" style="left:1473px;top:104px;width:95px;height:19px;background:#f0f0f0;border:1px solid #dadada;border-bottom:none;"></div><div class="t" style="left:1479px;top:108.69px;font-size:11px;color:#000;letter-spacing:-0.45px;">Object Placement</div><div class="r" style="left:1568px;top:104px;width:42px;height:19px;background:#f0f0f0;border:1px solid #dadada;border-bottom:none;"></div><div class="t" style="left:1574px;top:108.69px;font-size:11px;color:#000;letter-spacing:-0.45px;">Slicer</div><div class="r" style="left:1610px;top:104px;width:73px;height:19px;background:#f0f0f0;border:1px solid #dadada;border-bottom:none;"></div><div class="t" style="left:1616px;top:108.69px;font-size:11px;color:#000;letter-spacing:-0.45px;">Print Preview</div><div class="r" style="left:1683px;top:102px;width:87px;height:21px;background:#fff;border:1px solid #dadada;border-bottom:none;"></div><div class="t" style="left:1690px;top:106.69px;font-size:11px;color:#000;letter-spacing:-0.45px;">Manual Control</div><div class="r" style="left:1770px;top:104px;width:47px;height:19px;background:#f0f0f0;border:1px solid #dadada;border-bottom:none;"></div><div class="t" style="left:1776px;top:108.69px;font-size:11px;color:#000;letter-spacing:-0.45px;">SD Card</div><div class="r" style="left:1475px;top:125px;width:438px;height:47px;background:#78b0c4;border-top:2px solid #5d6f75;border-left:2px solid #5d6f75;"></div><svg class="r" style="left:1481px;top:131px" width="37" height="32" viewBox="0 0 37 32">
<rect x="1.5" y="1.5" width="33" height="29" rx="5" fill="#fff" stroke="#000" stroke-width="3"/>
<path d="M22 30.5v-6c0-2 1-3 3-3h10v4c0 3-2 5-5 5z" fill="#000"/><path d="M15 2h6l-3 6z" fill="#000"/>
<path d="M9 11.5l3.5-2.5h11.5v12l-3.5 2.5H9z" fill="#ddd4b4"/><rect x="9" y="11.5" width="11.5" height="12" fill="#e8753a"/><path d="M20.5 11.5l3.5-2.5v12l-3.5 2.5z" fill="#7ea058"/>
<text x="14.8" y="21.8" font-family="Liberation Sans" font-weight="bold" font-size="10.5" fill="#fff3d8" text-anchor="middle">R</text>
</svg><div class="t" style="left:1528px;top:136.90px;font-size:21px;color:#000;font-weight:bold;font-family:'Liberation Mono', monospace;letter-spacing:-0.4px;">Idle</div><div class="t" style="left:1479.5px;top:182.84px;font-size:12px;color:#000;letter-spacing:-0.6px;">G-Code:</div><div class="r" style="left:1527px;top:179px;width:276px;height:20px;background:#fff;border:1px solid #7a7a7a;"></div><div class="r" style="left:1810px;top:180px;width:81px;height:21px;background:#e1e1e1;border:1px solid #adadad;"></div><div class="t" style="left:1550px;width:600px;text-align:center;top:184.84px;font-size:12px;color:#000;">Send</div><svg class="r" style="left:1478px;top:213px" width="400" height="27" viewBox="1478 213 400 27">
<defs><linearGradient id="xyzg" x1="0" y1="0" x2="0" y2="1"><stop offset="0" stop-color="#6f9aa6"/><stop offset="0.15" stop-color="#9cc2cc"/><stop offset="0.35" stop-color="#6f98a4"/><stop offset="1" stop-color="#3f6a78"/></linearGradient>
<radialGradient id="valg" cx="0.35" cy="0.55" r="0.8"><stop offset="0" stop-color="#d6e8ee"/><stop offset="1" stop-color="#b4ccd4"/></radialGradient></defs>
<rect x="1478" y="213" width="400" height="27" fill="url(#xyzg)"/>
<path d="M1577.5 213v27M1677.5 213v27M1777.5 213v27" stroke="#2f5560" stroke-width="2"/>
<rect x="1502" y="218" width="69" height="17" rx="2" fill="url(#valg)" stroke="#5e7f88" stroke-width="1"/>
<rect x="1602" y="218" width="69" height="17" rx="2" fill="url(#valg)" stroke="#5e7f88" stroke-width="1"/>
<rect x="1702" y="218" width="69" height="17" rx="2" fill="url(#valg)" stroke="#5e7f88" stroke-width="1"/>
<rect x="1786" y="217" width="89" height="20" fill="#e6e6e6" stroke="#a8b8bc" stroke-width="1"/>
<path d="M1862 225l4 4l4-4" stroke="#444" stroke-width="1.2" fill="none"/>
</svg><div class="t" style="left:1487px;top:218.53px;font-size:16.5px;color:#000;">X</div><div class="t" style="left:1587px;top:218.53px;font-size:16.5px;color:#000;">Y</div><div class="t" style="left:1686px;top:218.53px;font-size:16.5px;color:#000;">Z</div><div class="t" style="left:969px;width:600px;text-align:right;top:222.04px;font-size:13px;color:#e01428;font-weight:bold;font-family:'Liberation Mono', monospace;letter-spacing:0.3px;">0.00</div><div class="t" style="left:1069px;width:600px;text-align:right;top:222.04px;font-size:13px;color:#e01428;font-weight:bold;font-family:'Liberation Mono', monospace;letter-spacing:0.3px;">0.00</div><div class="t" style="left:1169px;width:600px;text-align:right;top:222.04px;font-size:13px;color:#e01428;font-weight:bold;font-family:'Liberation Mono', monospace;letter-spacing:0.3px;">0.00</div><div class="t" style="left:1790px;top:221.84px;font-size:12px;color:#000;letter-spacing:-0.6px;">Extruder 1</div><svg class="r" style="left:1478px;top:245px" width="400" height="170" viewBox="1478 245 400 170"><defs>
<radialGradient id="jg" cx="0.5" cy="0.5" r="0.5"><stop offset="0" stop-color="#6a9aa8"/><stop offset="0.85" stop-color="#5a8b99"/><stop offset="1" stop-color="#4d7c8a"/></radialGradient>
<radialGradient id="cg" cx="0.5" cy="0.45" r="0.55"><stop offset="0" stop-color="#7fb2c0"/><stop offset="1" stop-color="#4e7e8c"/></radialGradient>
<filter id="sh" x="-10%" y="-10%" width="120%" height="120%"><feGaussianBlur stdDeviation="1.5"/></filter>
</defs><circle cx="1574.4" cy="330.8" r="76" fill="#000" opacity="0.35" filter="url(#sh)"/><circle cx="1574.4" cy="329.8" r="74.5" fill="url(#jg)" stroke="#233c44" stroke-width="1.2"/><circle cx="1574.4" cy="329.8" r="72.5" fill="none" stroke="#8cb8c4" stroke-width="1" opacity="0.6"/><path d="M1599.9 304.3L1626.0 278.2" stroke="#233c44" stroke-width="1.6"/><path d="M1601.1 305.1L1627.2 279.0" stroke="#a8d0da" stroke-width="1" opacity="0.8"/><path d="M1599.9 355.3L1626.0 381.4" stroke="#233c44" stroke-width="1.6"/><path d="M1601.1 356.1L1627.2 382.2" stroke="#a8d0da" stroke-width="1" opacity="0.8"/><path d="M1548.9 355.3L1522.8 381.4" stroke="#233c44" stroke-width="1.6"/><path d="M1550.1 356.1L1524.0 382.2" stroke="#a8d0da" stroke-width="1" opacity="0.8"/><path d="M1548.9 304.3L1522.8 278.2" stroke="#233c44" stroke-width="1.6"/><path d="M1550.1 305.1L1524.0 279.0" stroke="#a8d0da" stroke-width="1" opacity="0.8"/><circle cx="1574.4" cy="329.8" r="35.5" fill="url(#cg)" stroke="#233c44" stroke-width="1.3"/><circle cx="1574.4" cy="329.8" r="33.5" fill="none" stroke="#9cc8d4" stroke-width="1" opacity="0.5"/><path d="M1574.4 266l10 17h-20z M1574.4 393l10 -17h-20z M1510 329l17 -10v20z M1638 329l-17 -10v20z" fill="#000"/><text x="1574.4" y="338" font-family="Liberation Sans" font-weight="bold" font-size="26.5" fill="#000" text-anchor="middle" letter-spacing="-1">X/Y</text><rect x="1507" y="386" width="4" height="8" fill="#6a9aa8" stroke="#2f5560" stroke-width="0.8"/><path d="M1490.5 397.5L1501 388.5L1511.5 397.5V408H1490.5Z" fill="#5f909e" stroke="#2f5560" stroke-width="0.9"/><path d="M1501 384.5L1486 397.5L1488.5 400L1501 389L1513.5 400L1516 397.5Z" fill="#7aaab8" stroke="#2f5560" stroke-width="0.9"/><path d="M1721.20 329.40L1682.57 265.11A75 75 0 0 1 1759.83 265.11Z M1721.20 329.40L1759.83 393.69A75 75 0 0 1 1682.57 393.69Z" fill="#000" opacity="0.3" filter="url(#sh)"/><path d="M1721.20 328.40L1684.20 264.31A74 74 0 0 1 1758.20 264.31Z" fill="url(#jg)" stroke="#233c44" stroke-width="1.2"/><path d="M1721.20 328.40L1758.20 392.49A74 74 0 0 1 1684.20 392.49Z" fill="url(#jg)" stroke="#233c44" stroke-width="1.2"/><circle cx="1721.2" cy="329.4" r="36" fill="#000" opacity="0.3" filter="url(#sh)"/><circle cx="1721.2" cy="328.4" r="34.8" fill="url(#cg)" stroke="#233c44" stroke-width="1.3"/><path d="M1721.2 265l10 17h-20z" fill="#000"/><path d="M1821.20 329.40L1782.57 265.11A75 75 0 0 1 1859.83 265.11Z M1821.20 329.40L1859.83 393.69A75 75 0 0 1 1782.57 393.69Z" fill="#000" opacity="0.3" filter="url(#sh)"/><path d="M1821.20 328.40L1784.20 264.31A74 74 0 0 1 1858.20 264.31Z" fill="url(#jg)" stroke="#233c44" stroke-width="1.2"/><path d="M1821.20 328.40L1858.20 392.49A74 74 0 0 1 1784.20 392.49Z" fill="url(#jg)" stroke="#233c44" stroke-width="1.2"/><circle cx="1821.2" cy="329.4" r="36" fill="#000" opacity="0.3" filter="url(#sh)"/><circle cx="1821.2" cy="328.4" r="34.8" fill="url(#cg)" stroke="#233c44" stroke-width="1.3"/><path d="M1821.2 265l10 17h-20z" fill="#000"/><path d="M1721.2 393l10 -17h-20z" fill="#000"/><text x="1721" y="339.5" font-family="Liberation Sans" font-weight="bold" font-size="28" fill="#000" text-anchor="middle">Z</text><path d="M1821.2 363V400" stroke="#233c44" stroke-width="1.2"/><path d="M1803 377l11 5l-8 6z M1828 372.5l11 0.5l-7 6z M1830.5 382l11.5 0.5l-7.5 11z" fill="#000"/><g transform="translate(1808,325)"><circle r="7" fill="#000"/><circle r="8.5" fill="none" stroke="#000" stroke-width="3.2" stroke-dasharray="2.8 1.65"/><circle r="3" fill="#6f9fad"/></g><path d="M1817 315h10.5v20l-5.25 7.6l-5.25-7.6z" fill="#000"/></svg><svg class="r" style="left:1478px;top:418px" width="400" height="42" viewBox="1478 418 400 42"><defs><radialGradient id="bg1" cx="0.45" cy="0.35" r="0.65"><stop offset="0" stop-color="#8ab8c6"/><stop offset="1" stop-color="#4c7c8a"/></radialGradient>
<radialGradient id="bgg" cx="0.45" cy="0.35" r="0.65"><stop offset="0" stop-color="#7ce86a"/><stop offset="1" stop-color="#2aa82a"/></radialGradient></defs><path d="M1488 429a13 13 0 1 0 18 0" fill="none" stroke="#3d6a78" stroke-width="6" stroke-linecap="round"/><path d="M1488 429a13 13 0 1 0 18 0" fill="none" stroke="#6a9cab" stroke-width="3.5" stroke-linecap="round"/><path d="M1497 424v13" stroke="#3d6a78" stroke-width="6" stroke-linecap="round"/><path d="M1497 424v13" stroke="#6a9cab" stroke-width="3.5" stroke-linecap="round"/><circle cx="1542" cy="439" r="13.5" fill="none" stroke="#3d6a78" stroke-width="4.5"/><circle cx="1542" cy="439" r="13.5" fill="none" stroke="#6a9cab" stroke-width="2"/><rect x="1535" y="434" width="14" height="10" fill="#9cd0dc" stroke="#3d6a78" stroke-width="1.5"/><path d="M1531 439h4" stroke="#3d6a78" stroke-width="2"/><path d="M1533 449l18-19" stroke="#3d6a78" stroke-width="3.5"/><path d="M1533 449l18-19" stroke="#9cc8d4" stroke-width="1.2"/><circle cx="1587" cy="440" r="15.2" fill="#000" opacity="0.18"/><circle cx="1587" cy="439" r="15" fill="url(#bg1)" stroke="#3f6c7a" stroke-width="0.8"/><text x="1587" y="449.5" font-family="Liberation Sans" font-weight="bold" font-size="27" fill="#fff" stroke="#2f5a68" stroke-width="1.6" paint-order="stroke" text-anchor="middle">P</text><circle cx="1632" cy="440" r="15.2" fill="#000" opacity="0.18"/><circle cx="1632" cy="439" r="15" fill="url(#bg1)" stroke="#3f6c7a" stroke-width="0.8"/><text x="1632" y="449.5" font-family="Liberation Sans" font-weight="bold" font-size="27" fill="#fff" stroke="#2f5a68" stroke-width="1.6" paint-order="stroke" text-anchor="middle">1</text><circle cx="1677" cy="440" r="15.2" fill="#000" opacity="0.18"/><circle cx="1677" cy="439" r="15" fill="url(#bg1)" stroke="#3f6c7a" stroke-width="0.8"/><text x="1677" y="449.5" font-family="Liberation Sans" font-weight="bold" font-size="27" fill="#fff" stroke="#2f5a68" stroke-width="1.6" paint-order="stroke" text-anchor="middle">2</text><circle cx="1722" cy="440" r="15.2" fill="#000" opacity="0.18"/><circle cx="1722" cy="439" r="15" fill="url(#bg1)" stroke="#3f6c7a" stroke-width="0.8"/><text x="1722" y="449.5" font-family="Liberation Sans" font-weight="bold" font-size="27" fill="#fff" stroke="#2f5a68" stroke-width="1.6" paint-order="stroke" text-anchor="middle">3</text><circle cx="1767" cy="440" r="15.2" fill="#000" opacity="0.18"/><circle cx="1767" cy="439" r="15" fill="url(#bg1)" stroke="#3f6c7a" stroke-width="0.8"/><text x="1767" y="449.5" font-family="Liberation Sans" font-weight="bold" font-size="27" fill="#fff" stroke="#2f5a68" stroke-width="1.6" paint-order="stroke" text-anchor="middle">4</text><circle cx="1812" cy="440" r="15.2" fill="#000" opacity="0.18"/><circle cx="1812" cy="439" r="15" fill="url(#bg1)" stroke="#3f6c7a" stroke-width="0.8"/><text x="1812" y="449.5" font-family="Liberation Sans" font-weight="bold" font-size="27" fill="#fff" stroke="#2f5a68" stroke-width="1.6" paint-order="stroke" text-anchor="middle">5</text><circle cx="1857" cy="439" r="15.2" fill="url(#bgg)" stroke="#2f8f2f" stroke-width="0.8"/><text x="1857" y="449" font-family="Liberation Sans" font-weight="bold" font-size="26" fill="#fff" stroke="#2a8a2a" stroke-width="0.6" text-anchor="middle">?</text></svg><svg class="r" style="left:1478px;top:460px" width="420" height="125" viewBox="1478 460 420 125"><defs><pattern id="stp" width="4.2" height="20" patternUnits="userSpaceOnUse" x="1524"><rect width="4.2" height="20" fill="#72aabb"/><rect x="3.2" width="1" height="20" fill="#3e6e7c"/></pattern>
<linearGradient id="trs" x1="0" y1="0" x2="0" y2="1"><stop offset="0" stop-color="#000" stop-opacity="0.25"/><stop offset="0.3" stop-color="#fff" stop-opacity="0.1"/><stop offset="1" stop-color="#000" stop-opacity="0.3"/></linearGradient>
<linearGradient id="heat" x1="0" y1="0" x2="1" y2="0"><stop offset="0" stop-color="#0000f0"/><stop offset="0.08" stop-color="#0038ff"/><stop offset="0.25" stop-color="#00f0ff"/><stop offset="0.5" stop-color="#00e000"/><stop offset="0.62" stop-color="#80f000"/><stop offset="0.75" stop-color="#ffff00"/><stop offset="0.88" stop-color="#ff8c00"/><stop offset="0.96" stop-color="#ff1800"/><stop offset="1" stop-color="#f00000"/></linearGradient>
<linearGradient id="heatsh" x1="0" y1="0" x2="0" y2="1"><stop offset="0" stop-color="#000" stop-opacity="0.12"/><stop offset="0.5" stop-color="#fff" stop-opacity="0"/><stop offset="1" stop-color="#000" stop-opacity="0.15"/></linearGradient></defs><rect x="1524" y="470" width="312" height="12" rx="6" fill="url(#stp)" stroke="#4a7684" stroke-width="0.8"/><rect x="1524" y="470" width="312" height="12" rx="6" fill="url(#trs)"/><rect x="1524" y="502" width="312" height="12" rx="6" fill="url(#stp)" stroke="#4a7684" stroke-width="0.8"/><rect x="1524" y="502" width="312" height="12" rx="6" fill="url(#trs)"/><rect x="1524.5" y="534" width="311" height="12" fill="url(#heat)"/><rect x="1524.5" y="534" width="311" height="12" fill="url(#heatsh)"/><rect x="1524.5" y="566" width="311" height="12" fill="url(#heat)"/><rect x="1524.5" y="566" width="311" height="12" fill="url(#heatsh)"/><path d="M1610 466l3 5v10l-3 5l-3-5v-10z" fill="#000"/><path d="M1838 498l3 5v10l-3 5l-3-5v-10z" fill="#000"/><path d="M1677 530h8l-3 4q3 3 0 6l3 4h-8l3-4q-3-3 0-6z" fill="#000"/><path d="M1806 562h8l-3 4q3 3 0 6l3 4h-8l3-4q-3-3 0-6z" fill="#000"/><rect x="1844.5" y="466.5" width="46" height="19" fill="#fff" stroke="#b4b4b4"/><rect x="1874.5" y="468.0" width="14" height="16" fill="#f4f4f4" stroke="#d8d8d8" stroke-width="0.8"/><path d="M1881.5 470.5l3 3.5h-6z M1881.5 481.5l3-3.5h-6z" fill="#111"/><path d="M1875.5 476.0h12" stroke="#c4c4c4" stroke-width="1"/><rect x="1844.5" y="498.5" width="46" height="19" fill="#fff" stroke="#b4b4b4"/><rect x="1874.5" y="500.0" width="14" height="16" fill="#f4f4f4" stroke="#d8d8d8" stroke-width="0.8"/><path d="M1881.5 502.5l3 3.5h-6z M1881.5 513.5l3-3.5h-6z" fill="#111"/><path d="M1875.5 508.0h12" stroke="#c4c4c4" stroke-width="1"/><rect x="1844.5" y="530.5" width="48" height="19" fill="#fff" stroke="#b4b4b4"/><rect x="1876.5" y="532.0" width="14" height="16" fill="#f4f4f4" stroke="#d8d8d8" stroke-width="0.8"/><path d="M1883.5 534.5l3 3.5h-6z M1883.5 545.5l3-3.5h-6z" fill="#111"/><path d="M1877.5 540.0h12" stroke="#c4c4c4" stroke-width="1"/><rect x="1844.5" y="562.5" width="48" height="19" fill="#fff" stroke="#b4b4b4"/><rect x="1876.5" y="564.0" width="14" height="16" fill="#f4f4f4" stroke="#d8d8d8" stroke-width="0.8"/><path d="M1883.5 566.5l3 3.5h-6z M1883.5 577.5l3-3.5h-6z" fill="#111"/><path d="M1877.5 572.0h12" stroke="#c4c4c4" stroke-width="1"/><g fill="#000"><circle cx="1506.5" cy="468.5" r="2.3"/><path d="M1497 472l6-2l3 3l-2 5l3 2l2-1l0.5 1.3l-3 1.5l-4-2l-1.5 3l2.5 3l-1 4h-1.5l0.5-3l-3-3l-3 4h-3.5l4-5l2-6l-2 1l-1.5 3l-1.2-0.5z"/></g><path d="M1486 470h8M1488 474h6M1487 478h5" stroke="#000" stroke-width="0.8"/><g fill="#000"><ellipse cx="1491.5" cy="503.5" rx="4.2" ry="5" transform="rotate(-40 1491.5 503.5)"/><ellipse cx="1502" cy="503" rx="4.2" ry="5" transform="rotate(40 1502 503)"/><ellipse cx="1491" cy="514" rx="4.2" ry="5" transform="rotate(40 1491 514)"/><ellipse cx="1501.5" cy="514.5" rx="4.2" ry="5" transform="rotate(-40 1501.5 514.5)"/><circle cx="1496.5" cy="508.5" r="2.5"/></g><path d="M1486 519l20-20" stroke="#e02020" stroke-width="2"/><path d="M1485.5 531.5h22l2.5 17.5h-27z M1484.5 537.5h24 M1484 543h25.5 M1492.5 531.5l-1 17.5 M1500.5 531.5l0.8 17.5" fill="none" stroke="#000" stroke-width="2"/><path d="M1482 562h5v16l-2.5 4l-2.5-4z" fill="#000"/><text x="1488" y="580" font-family="Liberation Sans" font-size="17" fill="#000">1</text></svg><div class="t" style="left:1533.5px;top:471.54px;font-size:10px;color:#1a2a40;font-weight:bold;letter-spacing:-0.4px;">Feedrate</div><div class="t" style="left:1533.5px;top:503.54px;font-size:10px;color:#1a2a40;font-weight:bold;letter-spacing:-0.3px;">Fan</div><div class="t" style="left:1533.5px;top:535.53px;font-size:10px;color:#fff;font-weight:bold;letter-spacing:-0.3px;">Bed Temperature</div><div class="t" style="left:1533.5px;top:567.53px;font-size:10px;color:#fff;font-weight:bold;letter-spacing:-0.3px;">Extruder 1</div><div class="t" style="left:1230px;width:600px;text-align:right;top:535.53px;font-size:10px;color:#fff;font-weight:bold;letter-spacing:-0.4px;">60.09°C</div><div class="t" style="left:1380px;width:600px;text-align:center;top:567.53px;font-size:10px;color:#000;font-weight:bold;letter-spacing:-0.4px;">252.90°C</div><div class="t" style="left:1846px;top:469.34px;font-size:12px;color:#000;letter-spacing:-0.3px;">100</div><div class="t" style="left:1846px;top:501.34px;font-size:12px;color:#000;letter-spacing:-0.3px;">100</div><div class="t" style="left:1846px;top:533.34px;font-size:12px;color:#000;letter-spacing:-0.3px;">60</div><div class="t" style="left:1846px;top:565.34px;font-size:12px;color:#000;letter-spacing:-0.3px;">255</div><div class="r" style="left:0px;top:958px;width:1920px;height:6px;background:#fff;"></div><div class="r" style="left:0px;top:959px;width:1920px;height:1px;background:#646464;"></div><div class="r" style="left:1466px;top:102px;width:5px;height:856px;background:#fff;"></div><div class="r" style="left:0px;top:964px;width:1920px;height:1px;background:#646464;"></div><div class="r" style="left:0px;top:965px;width:1920px;height:25px;background:#efefef;"></div><div class="r" style="left:0px;top:965px;width:1px;height:92px;background:#646464;"></div><div class="r" style="left:1919px;top:965px;width:1px;height:92px;background:#646464;"></div><div class="t" style="left:7px;top:971.69px;font-size:11px;color:#000;letter-spacing:-0.3px;">Show in Log:</div><svg class="r" style="left:84.5px;top:972px" width="12" height="12"><defs><radialGradient id="rg84" cx="0.5" cy="0.4" r="0.6"><stop offset="0" stop-color="#d8f6ff"/><stop offset="1" stop-color="#7ad0f0"/></radialGradient></defs><circle cx="6" cy="6" r="5" fill="url(#rg84)" stroke="#1d3a60" stroke-width="1.4"/></svg><div class="t" style="left:97.5px;top:972.69px;font-size:11px;color:#000;letter-spacing:-0.45px;">Commands</div><svg class="r" style="left:171.5px;top:972px" width="12" height="12"><defs><radialGradient id="rg171" cx="0.5" cy="0.4" r="0.6"><stop offset="0" stop-color="#d8f6ff"/><stop offset="1" stop-color="#7ad0f0"/></radialGradient></defs><circle cx="6" cy="6" r="5" fill="url(#rg171)" stroke="#1d3a60" stroke-width="1.4"/></svg><div class="t" style="left:184.5px;top:972.69px;font-size:11px;color:#000;letter-spacing:-0.45px;">Infos</div><svg class="r" style="left:230px;top:972px" width="12" height="12"><defs><radialGradient id="rg230" cx="0.5" cy="0.4" r="0.6"><stop offset="0" stop-color="#d8f6ff"/><stop offset="1" stop-color="#7ad0f0"/></radialGradient></defs><circle cx="6" cy="6" r="5" fill="url(#rg230)" stroke="#1d3a60" stroke-width="1.4"/></svg><div class="t" style="left:243px;top:972.69px;font-size:11px;color:#000;letter-spacing:-0.45px;">Warnings</div><svg class="r" style="left:309.5px;top:972px" width="12" height="12"><defs><radialGradient id="rg309" cx="0.5" cy="0.4" r="0.6"><stop offset="0" stop-color="#d8f6ff"/><stop offset="1" stop-color="#7ad0f0"/></radialGradient></defs><circle cx="6" cy="6" r="5" fill="url(#rg309)" stroke="#1d3a60" stroke-width="1.4"/></svg><div class="t" style="left:322.5px;top:972.69px;font-size:11px;color:#000;letter-spacing:-0.45px;">Errors</div><svg class="r" style="left:371px;top:972px" width="12" height="12"><defs><radialGradient id="rg371" cx="0.5" cy="0.4" r="0.6"><stop offset="0" stop-color="#d8f6ff"/><stop offset="1" stop-color="#7ad0f0"/></radialGradient></defs><circle cx="6" cy="6" r="5" fill="url(#rg371)" stroke="#1d3a60" stroke-width="1.4"/></svg><div class="t" style="left:384px;top:972.69px;font-size:11px;color:#000;letter-spacing:-0.45px;">ACK</div><svg class="r" style="left:427px;top:972px" width="12" height="12"><defs><radialGradient id="rg427" cx="0.5" cy="0.4" r="0.6"><stop offset="0" stop-color="#d8f6ff"/><stop offset="1" stop-color="#7ad0f0"/></radialGradient></defs><circle cx="6" cy="6" r="5" fill="url(#rg427)" stroke="#1d3a60" stroke-width="1.4"/></svg><div class="t" style="left:440px;top:972.69px;font-size:11px;color:#000;letter-spacing:-0.45px;">Auto Scroll</div><svg class="r" style="left:516px;top:971px" width="12" height="14"><path d="M1 3h10M4 3V1.5h4V3M2.5 4.5h7l-0.6 8.5h-5.8z" stroke="#777" fill="#aaa" stroke-width="1"/></svg><div class="t" style="left:530px;top:972.69px;font-size:11px;color:#000;letter-spacing:-0.4px;">Clear Log</div><svg class="r" style="left:598px;top:970px" width="15" height="15"><path d="M1.5 2.5h7l2 2v7h-9z" fill="#fff" stroke="#777"/><path d="M5.5 5.5h6l2 2v6.5h-8z" fill="#fff" stroke="#777"/></svg><div class="t" style="left:614px;top:972.69px;font-size:11px;color:#000;letter-spacing:-0.3px;">Copy</div><div class="r" style="left:1px;top:990px;width:102px;height:16px;background:#5a9a9c;"></div><div class="r" style="left:103px;top:990px;width:1799px;height:16px;background:#fff;"></div><div class="t" style="left:7px;top:993.30px;font-size:12px;color:#f4f4f4;font-weight:bold;font-family:'Liberation Mono', monospace;letter-spacing:0.1px;">18:57:26.212</div><div class="t" style="left:109px;top:993.30px;font-size:12px;color:#10107a;font-weight:bold;font-family:'Liberation Mono', monospace;letter-spacing:0.1px;">N465 M105*32</div><div class="r" style="left:1px;top:1006px;width:102px;height:16px;background:#5a9a9c;"></div><div class="r" style="left:103px;top:1006px;width:1799px;height:16px;background:#fbefe6;"></div><div class="t" style="left:7px;top:1009.30px;font-size:12px;color:#f4f4f4;font-weight:bold;font-family:'Liberation Mono', monospace;letter-spacing:0.1px;">18:57:26.212</div><div class="t" style="left:109px;top:1009.30px;font-size:12px;color:#10107a;font-weight:bold;font-family:'Liberation Mono', monospace;letter-spacing:0.1px;">ok 465</div><div class="r" style="left:1px;top:1022px;width:102px;height:16px;background:#5a9a9c;"></div><div class="r" style="left:103px;top:1022px;width:1799px;height:16px;background:#fff;"></div><div class="t" style="left:7px;top:1025.30px;font-size:12px;color:#f4f4f4;font-weight:bold;font-family:'Liberation Mono', monospace;letter-spacing:0.1px;">18:57:26.243</div><div class="t" style="left:109px;top:1025.30px;font-size:12px;color:#10107a;font-weight:bold;font-family:'Liberation Mono', monospace;letter-spacing:0.1px;">T:252.90 /255 B:60.09 /60 B@:120 @:40</div><div class="r" style="left:1px;top:1038px;width:102px;height:16px;background:#5a9a9c;"></div><div class="r" style="left:103px;top:1038px;width:1799px;height:16px;background:#fbefe6;"></div><div class="t" style="left:7px;top:1041.30px;font-size:12px;color:#f4f4f4;font-weight:bold;font-family:'Liberation Mono', monospace;letter-spacing:0.1px;">18:57:27.213</div><div class="t" style="left:109px;top:1041.30px;font-size:12px;color:#10107a;font-weight:bold;font-family:'Liberation Mono', monospace;letter-spacing:0.1px;">wait</div><div class="r" style="left:1px;top:1054px;width:1901px;height:3px;background:#fff;"></div><div class="r" style="left:1902px;top:990px;width:17px;height:67px;background:#f0f0f0;"></div><svg class="r" style="left:1902px;top:990px" width="17" height="67"><path d="M5 12l3.5-3.5L12 12" stroke="#606060" stroke-width="1.6" fill="none"/><rect x="1" y="33" width="15" height="16" fill="#c2c2c2"/><path d="M5 56l3.5 3.5L12 56" stroke="#606060" stroke-width="1.6" fill="none"/></svg><div class="r" style="left:0px;top:1057px;width:1920px;height:1px;background:#646464;"></div><div class="r" style="left:0px;top:1058px;width:1920px;height:22px;background:#f0f0f0;"></div><div class="t" style="left:5px;top:1063.84px;font-size:12px;color:#000;">Connected: default</div><div class="t" style="left:784px;top:1063.84px;font-size:12px;color:#000;letter-spacing:-0.4px;">Extruder: 252.9/255°C Bed: 60.1/60°C</div><div class="t" style="left:1665px;top:1063.84px;font-size:12px;color:#000;">Idle</div><div class="r" style="left:1691px;top:1061px;width:213px;height:16px;background:#e6e6e6;border:1px solid #bcbcbc;"></div></body></html>
